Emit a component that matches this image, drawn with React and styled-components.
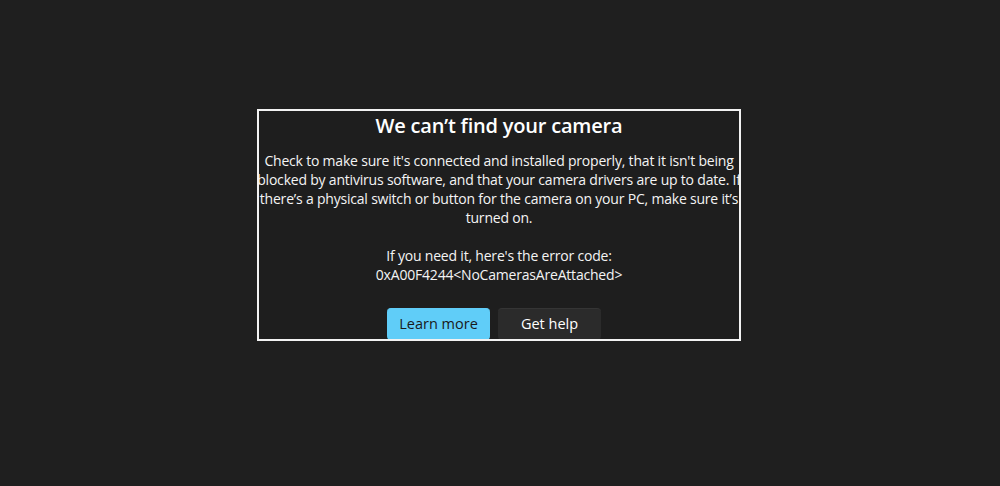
import styled, { createGlobalStyle } from "styled-components";

const GlobalStyle = createGlobalStyle`
  html, body {
    margin: 0;
    padding: 0;
    background: #1f1f1f;
  }
  body {
    font-family: "Open Sans", "Noto Sans", sans-serif;
    color: #ffffff;
  }
`;

const Page = styled.main`
  width: 1000px;
  height: 486px;
  display: flex;
  justify-content: center;
  align-items: flex-start;
  padding-top: 109px;
  box-sizing: border-box;
  background: #1f1f1f;
`;

const Dialog = styled.section`
  width: 484px;
  height: 232px;
  margin-right: 2px;
  box-sizing: border-box;
  border: 2px solid #f2f2f2;
  background: #1e1e1e;
  overflow: hidden;
  display: flex;
  flex-direction: column;
  align-items: center;
`;

const Title = styled.h1`
  margin: 2px 0 0;
  font-size: 20px;
  font-weight: 600;
  line-height: 26px;
  letter-spacing: -0.2px;
  white-space: nowrap;
`;

const Message = styled.div`
  margin-top: 12px;
  display: flex;
  flex-direction: column;
  align-items: center;
  font-size: 14px;
  line-height: 19px;
  letter-spacing: -0.2px;
  color: #f4f4f4;
`;

const Line = styled.span`
  white-space: nowrap;
  height: ${(p) => (p.$blank ? "19px" : "auto")};
`;

const Actions = styled.div`
  margin: 24px 10px 0 0;
  display: flex;
  gap: 8px;
`;

const Button = styled.button`
  width: 103px;
  height: 32px;
  border: none;
  border-top: 1px solid ${(p) => (p.$primary ? "#60cdf8" : "#353535")};
  border-radius: 4px;
  font-family: inherit;
  font-size: 14.5px;
  padding: 0 0 2px;
  background: ${(p) => (p.$primary ? "#60cdf8" : "#2b2b2b")};
  color: ${(p) => (p.$primary ? "#1a1a1a" : "#ffffff")};
  cursor: pointer;
`;

const lines = [
  "Check to make sure it's connected and installed properly, that it isn't being",
  "blocked by antivirus software, and that your camera drivers are up to date. If",
  "there’s a physical switch or button for the camera on your PC, make sure it’s",
  "turned on.",
];

export default function App() {
  return (
    <>
      <GlobalStyle />
      <Page>
        <Dialog>
          <Title>We can’t find your camera</Title>
          <Message>
            {lines.map((l) => (
              <Line key={l}>{l}</Line>
            ))}
            <Line $blank />
            <Line>If you need it, here's the error code:</Line>
            <Line>0xA00F4244&lt;NoCamerasAreAttached&gt;</Line>
          </Message>
          <Actions>
            <Button $primary>Learn more</Button>
            <Button>Get help</Button>
          </Actions>
        </Dialog>
      </Page>
    </>
  );
}
